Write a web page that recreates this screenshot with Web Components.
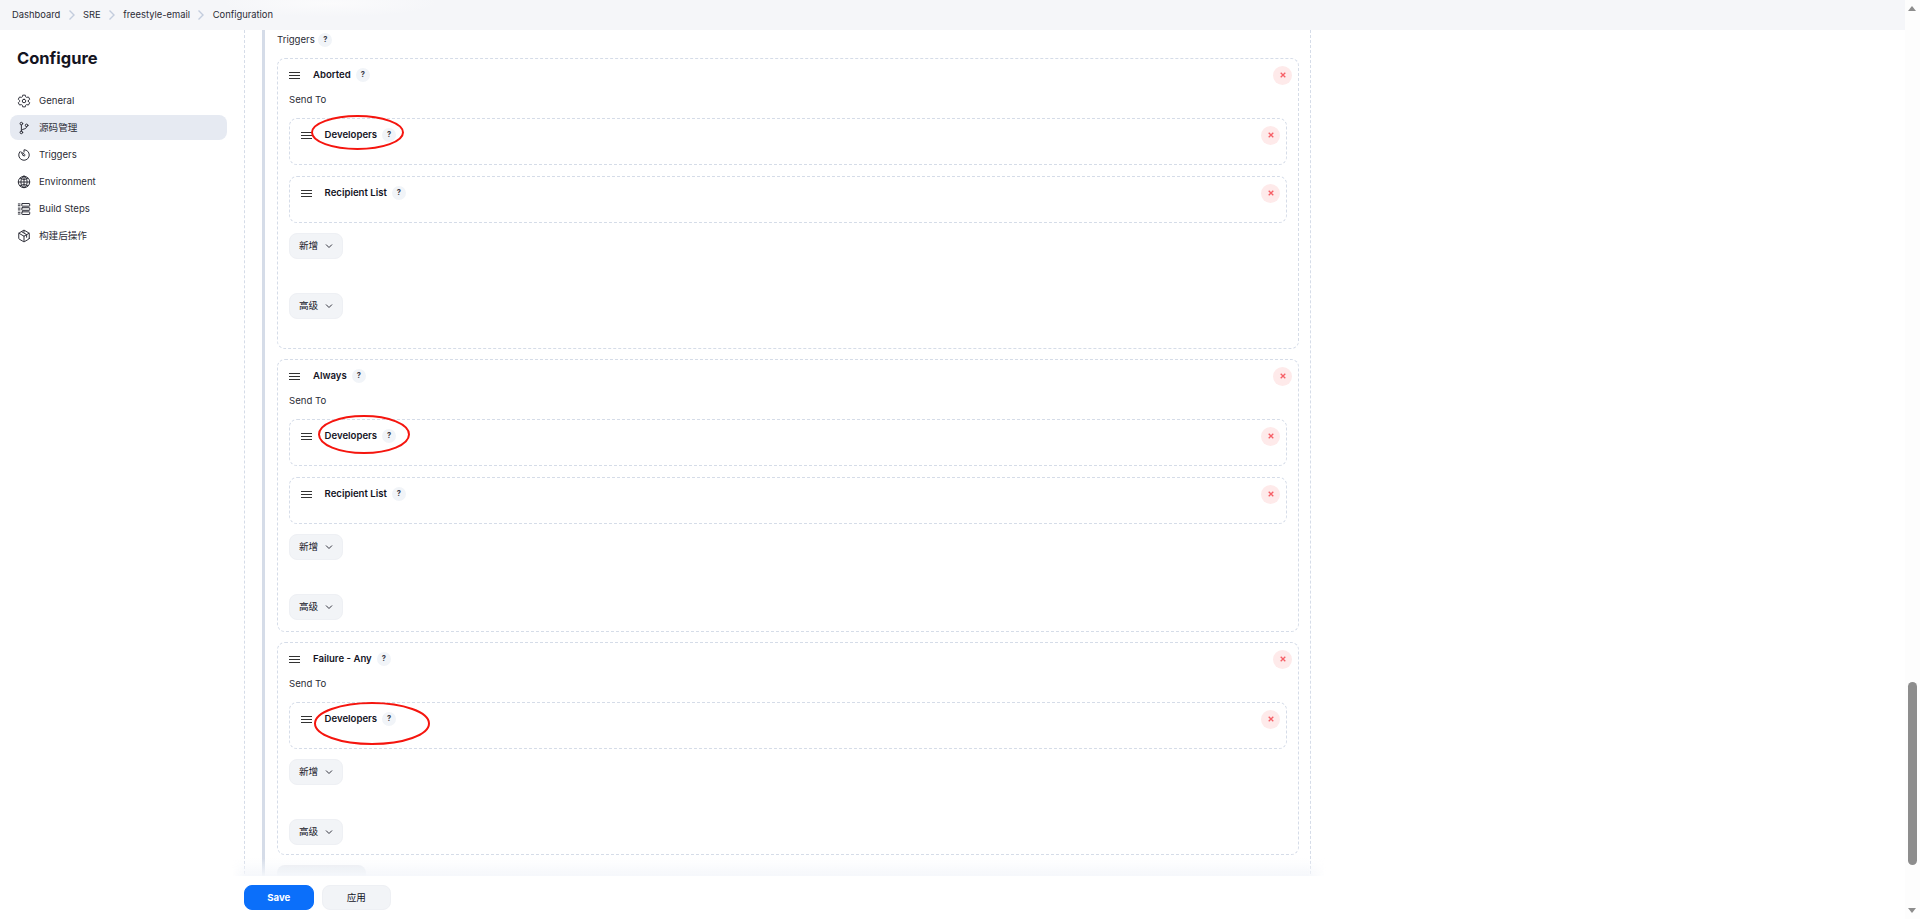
<!DOCTYPE html>
<html lang="zh">
<head>
<meta charset="utf-8">
<title>freestyle-email Config</title>
<style>
  html, body { margin: 0; height: 919px; overflow: hidden; background: #fff; }
  body { font: 9.6px/14px Inter, "Noto Sans CJK SC", sans-serif; color: #14141f; }
</style>
</head>
<body>
<jk-page>
  <jk-breadcrumbs slot="top">
    <a>Dashboard</a><a>SRE</a><a>freestyle-email</a><a>Configuration</a>
  </jk-breadcrumbs>
  <jk-sidebar slot="side">
    <jk-nav icon="gear">General</jk-nav>
    <jk-nav icon="branch" active>源码管理</jk-nav>
    <jk-nav icon="timer">Triggers</jk-nav>
    <jk-nav icon="globe">Environment</jk-nav>
    <jk-nav icon="steps">Build Steps</jk-nav>
    <jk-nav icon="cube">构建后操作</jk-nav>
  </jk-sidebar>

  <jk-help-label>Triggers</jk-help-label>

  <jk-trigger name="Aborted">
    <jk-chunk name="Developers" ring="21,-3.6,93,35"></jk-chunk>
    <jk-chunk name="Recipient List"></jk-chunk>
  </jk-trigger>
  <jk-trigger name="Always">
    <jk-chunk name="Developers" ring="28,-5,92,39"></jk-chunk>
    <jk-chunk name="Recipient List"></jk-chunk>
  </jk-trigger>
  <jk-trigger name="Failure - Any">
    <jk-chunk name="Developers" ring="23.5,-1,116,43"></jk-chunk>
  </jk-trigger>

  <jk-button slot="footer" primary>Save</jk-button>
  <jk-button slot="footer">应用</jk-button>
</jk-page>

<script>
const ICONS = {
  gear: `<path d="M262.29 192.31a64 64 0 1057.4 57.4 64.13 64.13 0 00-57.4-57.4zM416.39 256a154.34 154.34 0 01-1.53 20.79l45.21 35.46a10.81 10.81 0 012.45 13.75l-42.77 74a10.81 10.81 0 01-13.14 4.59l-44.9-18.08a16.11 16.11 0 00-15.17 1.75A164.48 164.48 0 01325 400.8a15.94 15.94 0 00-8.82 12.14l-6.73 47.89a11.08 11.08 0 01-10.68 9.17h-85.54a11.11 11.11 0 01-10.69-8.87l-6.72-47.82a16.07 16.07 0 00-9-12.22 155.3 155.3 0 01-21.46-12.57 16 16 0 00-15.11-1.71l-44.89 18.07a10.81 10.81 0 01-13.14-4.58l-42.77-74a10.8 10.8 0 012.45-13.75l38.21-30a16.05 16.05 0 006-14.08c-.36-4.17-.58-8.33-.58-12.5s.21-8.27.58-12.35a16 16 0 00-6.07-13.94l-38.19-30A10.81 10.81 0 0149.48 186l42.77-74a10.81 10.81 0 0113.14-4.59l44.9 18.08a16.11 16.11 0 0015.17-1.75A164.48 164.48 0 01187 111.2a15.94 15.94 0 008.82-12.14l6.73-47.89A11.08 11.08 0 01213.23 42h85.54a11.11 11.11 0 0110.69 8.87l6.72 47.82a16.07 16.07 0 009 12.22 155.3 155.3 0 0121.46 12.57 16 16 0 0015.11 1.71l44.89-18.07a10.81 10.81 0 0113.14 4.58l42.77 74a10.8 10.8 0 01-2.45 13.75l-38.21 30a16.05 16.05 0 00-6.05 14.08c.33 4.14.55 8.3.55 12.47z"/>`,
  branch: `<circle cx="160" cy="96" r="48"/><circle cx="160" cy="416" r="48"/><path d="M160 368V144"/><circle cx="352" cy="160" r="48"/><path d="M352 208c0 128-192 48-192 160"/>`,
  timer: `<path d="M112.91 128A191.85 191.85 0 0064 254c-1.18 106.35 85.65 193.8 192 194 106.2.2 192-85.83 192-192 0-104.54-83.55-189.61-187.5-192a4.36 4.36 0 00-4.5 4.37V152"/><path d="M233.38 278.63l-79-113a8.13 8.13 0 0111.32-11.32l113 79a32.5 32.5 0 01-37.25 53.26 33.21 33.21 0 01-8.07-7.94z"/>`,
  globe: `<path d="M256 48C141.13 48 48 141.13 48 256s93.13 208 208 208 208-93.13 208-208S370.87 48 256 48z"/><path d="M256 48c-58.07 0-112.67 93.13-112.67 208S197.93 464 256 464s112.67-93.13 112.67-208S314.07 48 256 48z"/><path d="M117.33 117.33c38.24 27.15 86.38 43.34 138.67 43.34s100.43-16.19 138.67-43.34M394.67 394.67c-38.24-27.15-86.38-43.34-138.67-43.34s-100.43 16.19-138.67 43.34M256 48v416M464 256H48"/>`,
  steps: `<rect x="176" y="56" width="288" height="96" rx="16"/><rect x="176" y="208" width="288" height="96" rx="16"/><rect x="176" y="360" width="288" height="96" rx="16"/><path d="M48 72h64M48 136h64M48 224h64M48 288h64M48 376h64M48 440h64"/>`,
  cube: `<path d="M448 341.37V170.61A32 32 0 00432.11 143l-152-88.46a47.94 47.94 0 00-48.24 0L79.89 143A32 32 0 0064 170.61v170.76A32 32 0 0079.89 369l152 88.46a48 48 0 0048.24 0l152-88.46A32 32 0 00448 341.37z"/><path d="M69 153.99l187 110 187-110M256 463.99v-200M165 96l187 110v96M256 48v70"/>`
};

class JkPage extends HTMLElement {
  constructor() {
    super();
    this.attachShadow({ mode: "open" });
    this.shadowRoot.innerHTML = `
      <style>
      :host { display: grid; grid-template-columns: 245px 1fr 15px; height: 919px; position: relative; overflow: hidden; }
      .top { position: absolute; left: 0; right: 15px; top: 0; height: 30px; z-index: 3;
        background: radial-gradient(ellipse 110px 14px at 330px 3px, #fbfbfc, rgba(251,251,252,0)), #f5f6f9; }
      .side { padding-top: 30px; border-right: 1px dashed #d5dce8; }
      .main { padding: 30px 0 0 17px; display: flex; flex-direction: column; height: 889px; overflow: hidden; }
      .form { width: 1049px; border-left: 3px solid #d5dce8; border-right: 1px dashed #d5dce8;
        box-sizing: border-box; padding: 0 11px 0 12px; flex: 1; }
      .more { width: 89px; height: 26px; border-radius: 8px; background: #e9ecf1; margin-top: 2px; }
      .fade { position: absolute; left: 232px; width: 1094px; top: 858px; height: 18px; z-index: 1;
        background: linear-gradient(rgba(245,247,251,0), rgba(245,247,251,.95));
        -webkit-mask-image: linear-gradient(90deg, transparent, #000 14px, #000 1075px, transparent); }
      .footer { position: absolute; left: 0; right: 15px; top: 876px; bottom: 0; z-index: 2; background: #fff;
        display: flex; gap: 8px; padding: 9px 0 0 244px; box-sizing: border-box; }
      .bar { background: #fdfdfd; position: relative; z-index: 4; }
      .thumb { position: absolute; left: 3px; top: 682px; width: 9px; height: 183px; border-radius: 5px; background: #8d8d8d; }
      .up, .down { position: absolute; left: 3px; border: 4.5px solid transparent; }
      .up { top: 6px; border-bottom: 5px solid #8d8d8d; border-top: 0; }
      .down { top: 908px; border-top: 5px solid #8d8d8d; border-bottom: 0; }
      </style>
      <div class="top"><slot name="top"></slot></div>
      <div class="side"><slot name="side"></slot></div>
      <div class="main">
        <div class="form"><slot></slot><div class="more"></div></div>
      </div>
      <div class="bar"><div class="up"></div><div class="thumb"></div><div class="down"></div></div>
      <div class="fade"></div>
      <div class="footer"><slot name="footer"></slot></div>
    `;
  }
}
customElements.define("jk-page", JkPage);

class JkBreadcrumbs extends HTMLElement {
  constructor() {
    super();
    this.attachShadow({ mode: "open" });
    const links = Array.from(this.querySelectorAll("a")).map((a) => `<span>${a.textContent}</span>`);
    const sep = `<svg width="8" height="12" viewBox="0 0 8 12" fill="none" stroke="#c3cddd" stroke-width="1.4"><path d="M1.5 1.5l4.5 4.5-4.5 4.5"/></svg>`;
    this.shadowRoot.innerHTML = `
      <style>
      :host { display: flex; align-items: center; gap: 7.3px; height: 30px; padding-left: 12px; color: #2b2c36; font-size: 9.4px; }
      svg { display: block; }
      </style>
      ${links.join(sep)}
    `;
  }
}
customElements.define("jk-breadcrumbs", JkBreadcrumbs);

class JkSidebar extends HTMLElement {
  constructor() {
    super();
    this.attachShadow({ mode: "open" });
    this.shadowRoot.innerHTML = `
      <style>
      :host { display: block; padding: 0 17px 0 10px; }
      h1 { font-size: 16.5px; line-height: 24px; font-weight: 700; margin: 16px 0 18px 7px; color: #14141f; }
      nav { display: flex; flex-direction: column; gap: 2px; }
      </style>
      <h1>Configure</h1>
      <nav><slot></slot></nav>
    `;
  }
}
customElements.define("jk-sidebar", JkSidebar);

class JkNav extends HTMLElement {
  constructor() {
    super();
    this.attachShadow({ mode: "open" });
    this.shadowRoot.innerHTML = `
      <style>
      :host { display: flex; align-items: center; gap: 8px; height: 25px; padding-left: 7px; border-radius: 8px; color: #2b2c36; }
      :host([active]) { background: #e6eaf2; }
      svg { width: 14px; height: 14px; fill: none; stroke: #2b2c36; stroke-width: 36; stroke-linecap: round; stroke-linejoin: round; flex: none; }
      </style>
      <svg viewBox="0 0 512 512">${ICONS[this.getAttribute("icon")]}</svg>
      <span><slot></slot></span>
    `;
  }
}
customElements.define("jk-nav", JkNav);

class JkHelp extends HTMLElement {
  constructor() {
    super();
    this.attachShadow({ mode: "open" });
    this.shadowRoot.innerHTML = `
      <style>
      :host { display: inline-flex; align-items: center; justify-content: center; width: 14px; height: 14px; border-radius: 50%;
        background: #f1f4f8; font-size: 7.5px; font-weight: 700; color: #3c3d48; margin-left: 5px; flex: none; }
      </style>?
    `;
  }
}
customElements.define("jk-help", JkHelp);

class JkHelpLabel extends HTMLElement {
  constructor() {
    super();
    this.attachShadow({ mode: "open" });
    this.shadowRoot.innerHTML = `
      <style>
      :host { display: flex; align-items: center; height: 20px; margin-bottom: 8px; color: #2b2c36; }
      jk-help { margin-left: 3.5px; }
      </style>
      <slot></slot><jk-help></jk-help>
    `;
  }
}
customElements.define("jk-help-label", JkHelpLabel);

class JkHeader extends HTMLElement {
  // the drag handle, bold name, help mark and delete button on top of a card
  constructor() {
    super();
    this.attachShadow({ mode: "open" });
    this.shadowRoot.innerHTML = `
      <style>
      :host { display: flex; align-items: center; height: 20px; font-weight: 600; color: #14141f; }
      .handle { width: 11px; height: 7px; margin-right: 13px; flex: none;
        border-top: 1px solid #333; border-bottom: 1px solid #333; position: relative; box-sizing: border-box; }
      .handle::after { content: ""; position: absolute; left: 0; right: 0; top: 2px; height: 1px; background: #333; }
      .del { margin-left: auto; width: 19px; height: 19px; border-radius: 50%; background: #feeaea; display: flex; align-items: center; justify-content: center; }
      .del svg { width: 6px; height: 6px; stroke: #f65f66; stroke-width: 1.3; fill: none; display: block; }
      </style>
      <div class="handle"></div>
      <span>${this.getAttribute("name")}</span>
      <jk-help></jk-help>
      <div class="del"><svg viewBox="0 0 6 6"><path d="M.7.7l4.6 4.6M5.3.7L.7 5.3"/></svg></div>
    `;
  }
}
customElements.define("jk-header", JkHeader);

class JkTrigger extends HTMLElement {
  constructor() {
    super();
    this.attachShadow({ mode: "open" });
    this.shadowRoot.innerHTML = `
      <style>
      :host { display: block; border: 1px dashed #d5dce8; border-radius: 8px; padding: 6px 6px 11px 11px; margin-bottom: 10px; box-sizing: border-box; }
      :host(:first-of-type) { padding-bottom: 29px; }
      :host(:last-of-type) { padding-bottom: 9px; }
      .to { margin: 8px 0 11px; height: 14px; color: #2b2c36; }
      .list { display: flex; flex-direction: column; gap: 11.5px; }
      .stack { display: flex; flex-direction: column; align-items: flex-start; }
      .add { margin-top: 10.5px; }
      .adv { margin-top: 34px; }
      </style>
      <jk-header name="${this.getAttribute("name")}"></jk-header>
      <div class="to">Send To</div>
      <div class="list"><slot></slot></div>
      <div class="stack">
        <jk-button class="add" menu>新增</jk-button>
        <jk-button class="adv" menu>高级</jk-button>
      </div>
    `;
  }
}
customElements.define("jk-trigger", JkTrigger);

class JkChunk extends HTMLElement {
  constructor() {
    super();
    this.attachShadow({ mode: "open" });
    let ring = "";
    if (this.hasAttribute("ring")) {
      const [x, y, w, h] = this.getAttribute("ring").split(",").map(Number);
      // red annotation drawn over the card in the source picture
      ring = `<svg class="ring" style="left:${x}px;top:${y}px" width="${w}" height="${h}" viewBox="0 0 ${w} ${h}" fill="none" stroke="#f5150e" stroke-width="2"><ellipse cx="${w / 2}" cy="${h / 2}" rx="${w / 2 - 1}" ry="${h / 2 - 1}"/></svg>`;
    }
    this.shadowRoot.innerHTML = `
      <style>
      :host { display: block; position: relative; height: 46.5px; box-sizing: border-box; border: 1px dashed #d5dce8; border-radius: 8px; padding: 6px 6px 0 10.5px; margin-right: 5px; }
      .ring { position: absolute; pointer-events: none; }
      </style>
      <jk-header name="${this.getAttribute("name")}"></jk-header>
      ${ring}
    `;
  }
}
customElements.define("jk-chunk", JkChunk);

class JkButton extends HTMLElement {
  constructor() {
    super();
    this.attachShadow({ mode: "open" });
    const chevron = this.hasAttribute("menu")
      ? `<svg width="8" height="8" viewBox="0 0 8 8" fill="none" stroke="#33343f" stroke-width="1"><path d="M1 2.5l3 3 3-3"/></svg>`
      : "";
    this.shadowRoot.innerHTML = `
      <style>
      :host { display: inline-flex; align-items: center; justify-content: center; gap: 7px; height: 25px; width: 69.5px; box-sizing: border-box;
        border-radius: 8px; background: #f2f4f7; border: 1px solid #eef0f4; font-weight: 400; color: #14141f; }
      :host([menu]) { width: 54px; height: 26px; }
      :host([primary]) { background: #0b6ffa; border-color: #0b6ffa; color: #fff; font-weight: 700; }
      </style>
      <span><slot></slot></span>${chevron}
    `;
  }
}
customElements.define("jk-button", JkButton);
</script>
</body>
</html>
